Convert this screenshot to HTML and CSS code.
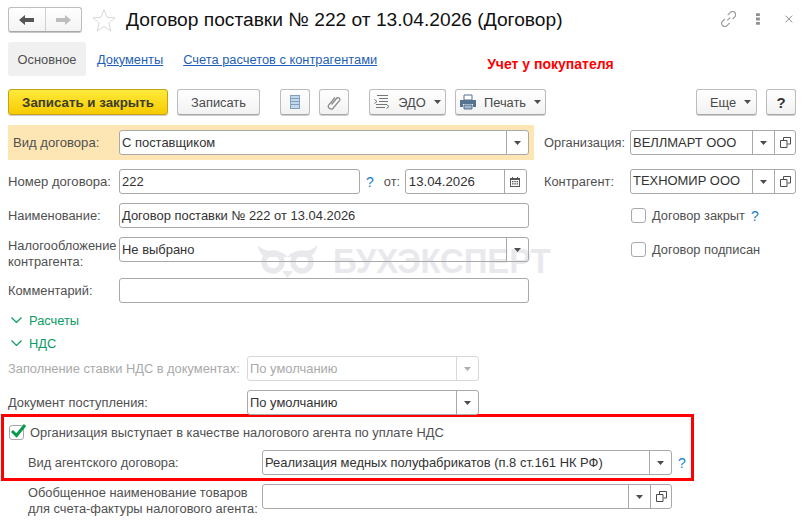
FILE: index.html
```html
<!DOCTYPE html>
<html lang="ru">
<head>
<meta charset="utf-8">
<title>Договор поставки</title>
<link rel="stylesheet" href="styles.css">
</head>
<body>
<svg class="defs" width="0" height="0">
  <symbol id="tri" viewBox="0 0 7 4"><path d="M0 0h7L3.500 4z" fill="#4d4d4d"/></symbol>
  <symbol id="open" viewBox="0 0 11 11"><path d="M3.500 3V.5h7v6.500H7.500M.5 3.500h6.500v7H.5z" fill="none" stroke="#4d4d4d"/></symbol>
</svg>
<div class="page">
  <div class="watermark">
    <svg class="owl" width="62" height="36" viewBox="0 0 62 36"><path d="M1 2C6 8 12 8 18 8c6 0 10 3 12.500 6C33 11 37 8 43 8c6 0 12 0 17-6 0 6-4 10-7 12H8C5 12 1 8 1 2z" fill="#e9e9ed"/><circle cx="16" cy="19" r="9" fill="none" stroke="#e9e9ed" stroke-width="5.500"/><circle cx="45" cy="19" r="9" fill="none" stroke="#e9e9ed" stroke-width="5.500"/><path d="M25 28h11l-5.500 7z" fill="#e9e9ed"/></svg>
    <span class="wm-text">БУХЭКСПЕРТ</span>
  </div>

  <header class="header">
    <div class="nav">
      <span class="nav-btn"><svg width="16" height="10" viewBox="0 0 16 10"><path d="M0 5l6-5v3h9v4H6v3z" fill="#555"/></svg></span>
      <span class="nav-btn nav-next"><svg width="16" height="10" viewBox="0 0 16 10"><path d="M16 5l-6-5v3H1v4h9v3z" fill="#bdbdbd"/></svg></span>
    </div>
    <svg class="star" width="24" height="24" viewBox="0 0 24 24"><path d="M12 1.500l3 7.800 8 .5-6.200 5.200 2 8L12 18.500 5.200 23l2-8L1 9.800l8-.5z" fill="none" stroke="#d8d8d8"/></svg>
    <h1 class="title">Договор поставки № 222 от 13.04.2026 (Договор)</h1>
    <div class="win-tools">
      <svg width="16" height="16" viewBox="0 0 16 16"><path d="M6.500 9.500l3-3M7 4l2.500-2.500a3 3 0 0 1 5 4L12 8M9 12l-2.500 2.500a3 3 0 0 1-5-4L4 8" fill="none" stroke="#9a9a9a" stroke-width="1.200"/></svg>
      <svg class="dots" width="4" height="12" viewBox="0 0 4 12"><path d="M0 0h4v3H0zM0 4.500h4v3H0zM0 9h4v3H0z" fill="#8f8f8f"/></svg>
      <svg width="8" height="8" viewBox="0 0 8 8"><path d="M.5.500l7 7M7.500.500l-7 7" stroke="#8a8a8a"/></svg>
    </div>
  </header>

  <nav class="tabs">
    <span class="tab tab-active">Основное</span>
    <a class="tab-link tab-docs" href="#">Документы</a>
    <a class="tab-link" href="#">Счета расчетов с контрагентами</a>
    <span class="note">Учет у покупателя</span>
  </nav>

  <div class="toolbar">
    <button class="btn btn-primary">Записать и закрыть</button>
    <button class="btn btn-save">Записать</button>
    <button class="btn btn-icon btn-list"><svg width="10" height="14" viewBox="0 0 10 14"><path d="M0 0h10v14H0z" fill="#7f9fbd"/><path d="M1 1h8v2H1zM1 4h8v2H1zM1 7h8v2H1zM1 10h8v3H1z" fill="#c5d8ea"/></svg></button>
    <button class="btn btn-icon"><svg width="14" height="15" viewBox="0 0 14 15"><path d="M4.500 9.500l5-6a1.800 1.800 0 0 1 3 2.200l-6.500 7.500a2.700 2.700 0 0 1-4.300-3.200L8 2.500" fill="none" stroke="#8b8b8b" stroke-width="1.300"/></svg></button>
    <button class="btn btn-menu btn-edo"><svg width="16" height="16" viewBox="0 0 16 16"><path d="M3 1.500h11M5 4.500h9M5 7.500h9M3 7.500L.5 5.500M3 7.500l-2.500 2M2 10.500h11M2 13.500h9M12.500 10.500l2.500 2-2.500 2" fill="none" stroke="#777"/></svg><span>ЭДО</span><svg class="tri" width="7" height="4"><use href="#tri"/></svg></button>
    <button class="btn btn-menu btn-print"><svg width="16" height="16" viewBox="0 0 16 16"><path d="M4 1h8v5H4z" fill="#fff" stroke="#56738f"/><path d="M0 6h16v7h-3v-3H3v3H0z" fill="#56738f"/><path d="M4 11h8v4H4z" fill="#9db5cb" stroke="#56738f"/></svg><span>Печать</span><svg class="tri" width="7" height="4"><use href="#tri"/></svg></button>
    <div class="toolbar-end">
      <button class="btn btn-menu btn-more"><span>Еще</span><svg class="tri" width="7" height="4"><use href="#tri"/></svg></button>
      <button class="btn btn-icon btn-help">?</button>
    </div>
  </div>

  <div class="top">
    <div class="left">
      <div class="band">
        <label class="lbl lbl-band lbl-wide">Вид договора:</label>
        <div class="field f-410 field-white"><span class="val">С поставщиком</span><span class="cell"><svg width="7" height="4"><use href="#tri"/></svg></span></div>
      </div>
      <div class="row r-first">
        <label class="lbl lbl-wide">Номер договора:</label>
        <div class="field f-241"><span class="val">222</span></div>
        <span class="hint hint-num">?</span>
        <span class="lbl-inline">от:</span>
        <div class="field f-122"><span class="val val-date">13.04.2026</span><span class="cell"><svg width="10" height="10" viewBox="0 0 10 10"><path d="M0 1h10v9H0z" fill="#555"/><path d="M1 3h8v6H1z" fill="#fff"/><path d="M2 4h1.500v1.200H2zM4.300 4h1.500v1.200H4.300zM6.600 4h1.500v1.200H6.600zM2 6.300h1.500v1.200H2zM4.300 6.300h1.500v1.200H4.300zM6.600 6.300h1.500v1.200H6.600zM2 0h1v2H2zM7 0h1v2H7z" fill="#555"/></svg></span></div>
      </div>
      <div class="row">
        <label class="lbl">Наименование:</label>
        <div class="field f-410"><span class="val">Договор поставки № 222 от 13.04.2026</span></div>
      </div>
      <div class="row">
        <label class="lbl lbl-two">Налогообложение контрагента:</label>
        <div class="field f-410"><span class="val">Не выбрано</span><span class="cell"><svg width="7" height="4"><use href="#tri"/></svg></span></div>
      </div>
      <div class="row r-comment">
        <label class="lbl">Комментарий:</label>
        <div class="field f-410"></div>
      </div>
    </div>
    <div class="right">
      <div class="row r-org">
        <label class="lbl lbl-right">Организация:</label>
        <div class="field f-166"><span class="val">ВЕЛЛМАРТ ООО</span><span class="cell"><svg width="7" height="4"><use href="#tri"/></svg></span><span class="cell cell-open"><svg width="11" height="11"><use href="#open"/></svg></span></div>
      </div>
      <div class="row r-first">
        <label class="lbl lbl-right">Контрагент:</label>
        <div class="field f-166"><span class="val val-tight">ТЕХНОМИР ООО</span><span class="cell"><svg width="7" height="4"><use href="#tri"/></svg></span><span class="cell cell-open"><svg width="11" height="11"><use href="#open"/></svg></span></div>
      </div>
      <div class="row r-check">
        <span class="check"></span><span class="check-text">Договор закрыт</span><span class="hint hint-closed">?</span>
      </div>
      <div class="row r-check">
        <span class="check"></span><span class="check-text">Договор подписан</span>
      </div>
    </div>
  </div>

  <div class="expander exp-first"><svg width="11" height="6" viewBox="0 0 11 6"><path d="M.5.500l5 5 5-5" fill="none" stroke="#0b9b63" stroke-width="1.200"/></svg><span>Расчеты</span></div>
  <div class="expander exp-second"><svg width="11" height="6" viewBox="0 0 11 6"><path d="M.5.500l5 5 5-5" fill="none" stroke="#0b9b63" stroke-width="1.200"/></svg><span>НДС</span></div>

  <div class="row r-vat">
    <label class="lbl lbl-vat lbl-off">Заполнение ставки НДС в документах:</label>
    <div class="field f-232 field-off"><span class="val">По умолчанию</span><span class="cell"><svg width="7" height="4"><use href="#tri"/></svg></span></div>
  </div>
  <div class="row r-doc">
    <label class="lbl lbl-vat">Документ поступления:</label>
    <div class="field f-232"><span class="val">По умолчанию</span><span class="cell"><svg width="7" height="4"><use href="#tri"/></svg></span></div>
  </div>

  <section class="agent">
    <div class="agent-check">
      <span class="check check-on"><svg width="17" height="15" viewBox="0 0 17 15"><path d="M2 8l4.500 4.500L15 2" fill="none" stroke="#0a9a4e" stroke-width="3"/></svg></span>
      <span class="check-text">Организация выступает в качестве налогового агента по уплате НДС</span>
    </div>
    <div class="agent-row">
      <label class="lbl lbl-agent">Вид агентского договора:</label>
      <div class="field f-410"><span class="val">Реализация медных полуфабрикатов (п.8 ст.161 НК РФ)</span><span class="cell"><svg width="7" height="4"><use href="#tri"/></svg></span></div>
      <span class="hint hint-agent">?</span>
    </div>
  </section>

  <div class="row r-generic">
    <label class="lbl lbl-agent lbl-two">Обобщенное наименование товаров<br>для счета-фактуры налогового агента:</label>
    <div class="field f-410"><span class="val"></span><span class="cell"><svg width="7" height="4"><use href="#tri"/></svg></span><span class="cell cell-open"><svg width="11" height="11"><use href="#open"/></svg></span></div>
  </div>
</div>
</body>
</html>
```
FILE: styles.css
```css
* { box-sizing: border-box; }
html, body { margin: 0; padding: 0; background: #fff; }
body { font-family: "Liberation Sans", Arial, sans-serif; font-size: 12.85px; color: #505050; }
.defs { position: absolute; }
.page { position: relative; z-index: 0; width: 803px; height: 524px; overflow: hidden; }

.watermark { position: absolute; z-index: -1; left: 257px; top: 243px; display: flex; align-items: flex-start; }
.wm-text { margin-left: 14px; margin-top: 0; font-size: 33px; line-height: 36px; font-weight: 700; color: #e9e9ed; letter-spacing: -.15px; transform: scaleY(1.08); transform-origin: 50% 50%; }

.header { display: flex; align-items: center; height: 25px; margin: 7px 0 0 8px; position: relative; }
.nav { display: flex; width: 74px; height: 25px; border: 1px solid #bdbdbd; border-bottom-color: #a8a8a8; border-radius: 3px; background: linear-gradient(#fff, #f3f3f3); box-shadow: 0 1px 0 #c8c8c8; }
.nav-btn { flex: 1; display: flex; align-items: center; justify-content: center; }
.nav-next { border-left: 1px solid #d0d0d0; }
.star { margin-left: 10px; }
.title { margin: 0 0 0 10px; font-size: 19.2px; line-height: 25px; font-weight: 400; color: #111; white-space: nowrap; }
.win-tools { position: absolute; left: 713px; top: 4px; width: 72px; display: flex; align-items: center; }
.dots { margin-left: 20px; }
.win-tools svg:last-child { margin-left: 25px; }

.tabs { display: flex; align-items: center; height: 34px; margin: 10px 0 0 8px; position: relative; }
.tab { display: flex; align-items: center; justify-content: center; width: 78px; height: 34px; border-radius: 3px; }
.tab-active { background: #f0f0f0; }
.tab-link { color: #1f5fb4; text-decoration: underline; white-space: nowrap; }
.tab-docs { margin: 0 20px 0 11px; }
.note { margin-left: 110px; margin-top: 10px; font-size: 14px; font-weight: 700; color: #f00; white-space: nowrap; }

.toolbar { display: flex; height: 26px; margin: 13px 7px 0 8px; }
.btn { height: 26px; padding: 0; border: 1px solid #bcbcbc; border-bottom-color: #a6a6a6; border-radius: 3px; background: linear-gradient(#fff, #f2f2f2); box-shadow: 0 1px 0 #cfcfcf; font: inherit; color: #4a4a4a; display: flex; align-items: center; justify-content: center; }
.btn-primary { width: 160px; font-size: 13.3px; font-weight: 700; background: linear-gradient(#ffea3c, #f6cb00); border-color: #c4a21a; color: #3d3d2a; }
.btn-save { width: 83px; margin-left: 9px; }
.btn-icon { width: 30px; margin-left: 9px; }
.btn-list { margin-left: 20px; }
.btn-menu span { margin: 0 8px; }
.btn-edo { width: 77px; margin-left: 20px; }
.btn-print { width: 91px; margin-left: 9px; }
.btn-more { width: 61px; }
.toolbar-end { margin-left: auto; display: flex; }
.btn-help { font-weight: 700; font-size: 15px; color: #333; }

.top { display: flex; margin-top: 10px; }
.left { width: 526px; margin-left: 8px; }
.right { margin-left: 10px; }
.band { display: flex; align-items: center; height: 35px; padding-left: 5px; background: #fde6b4; }
.row { display: flex; align-items: center; height: 25px; margin-top: 9px; }
.r-first { margin-top: 14px; }
.band + .r-first { margin-top: 9px; }
.right .r-first { margin-top: 14px; }
.r-org { margin-top: 5px; }
.r-comment { margin-top: 16px; }
.r-check { margin-top: 9px; margin-left: 87px; }
.right .r-org + .r-first { margin-top: 14px; }

.lbl { flex: none; width: 111px; white-space: nowrap; }
.lbl-wide { font-size: 13.1px; }
.lbl-band { width: 106px; }
.lbl-right { width: 86px; }
.lbl-two { white-space: normal; line-height: 16px; align-self: flex-start; padding-top: 1px; }
.lbl-inline { margin: 0 4px 0 0; width: 17px; }
.lbl-vat { width: 239px; }
.lbl-off { color: #a9a9a9; }
.lbl-agent { width: 234px; }

.field { flex: none; display: flex; height: 25px; border: 1px solid #a9a9a9; border-radius: 3px; background: transparent; color: #333; }
.field-white { background: #fff; }
.f-410 { width: 410px; }
.f-241 { width: 241px; }
.f-122 { width: 122px; }
.f-166 { width: 166px; }
.f-232 { width: 232px; }
.val { flex: 1; min-width: 0; padding-left: 2px; font-size: 12.95px; line-height: 23px; white-space: nowrap; color: #333; }
.val-date { padding-left: 3px; font-size: 13.2px; }
.val-tight { margin-top: -1px; }
.cell { flex: none; width: 22px; display: flex; align-items: center; justify-content: center; border-left: 1px solid #a9a9a9; }
.cell-open { width: 21px; }
.field-off { border-color: #d8d8d8; }
.field-off .val { color: #aaa; }
.field-off .cell { border-color: #d8d8d8; }
.field-off .cell svg { opacity: .45; }

.hint { font-size: 14px; color: #1a7fc4; }
.hint-num { margin: 0 10px 0 6px; }
.hint-closed { margin-left: 6px; }
.hint-agent { margin-left: 6px; }

.check { flex: none; display: block; position: relative; width: 15px; height: 15px; border: 1px solid #a9a9a9; border-radius: 3px; }
.check-text { margin-left: 6px; white-space: nowrap; }
.check-on svg { position: absolute; left: 0; top: -3px; }

.expander { display: flex; align-items: center; height: 16px; margin-left: 11px; color: #0b9b63; }
.expander span { margin-left: 7px; }
.exp-first { margin-top: 9px; }
.exp-second { margin-top: 7px; }

.r-vat { margin: 5px 0 0 8px; }
.r-doc { margin: 9px 0 0 8px; }

.agent { width: 693px; height: 67px; margin: -1px 0 0 1px; border: 3px solid #f00; padding-left: 5px; }
.agent-check { display: flex; align-items: center; height: 15px; margin-top: 8px; }
.agent-row { display: flex; align-items: center; height: 25px; margin: 10px 0 0 19px; }
.r-generic { margin: 3px 0 0 28px; align-items: flex-start; }
```
